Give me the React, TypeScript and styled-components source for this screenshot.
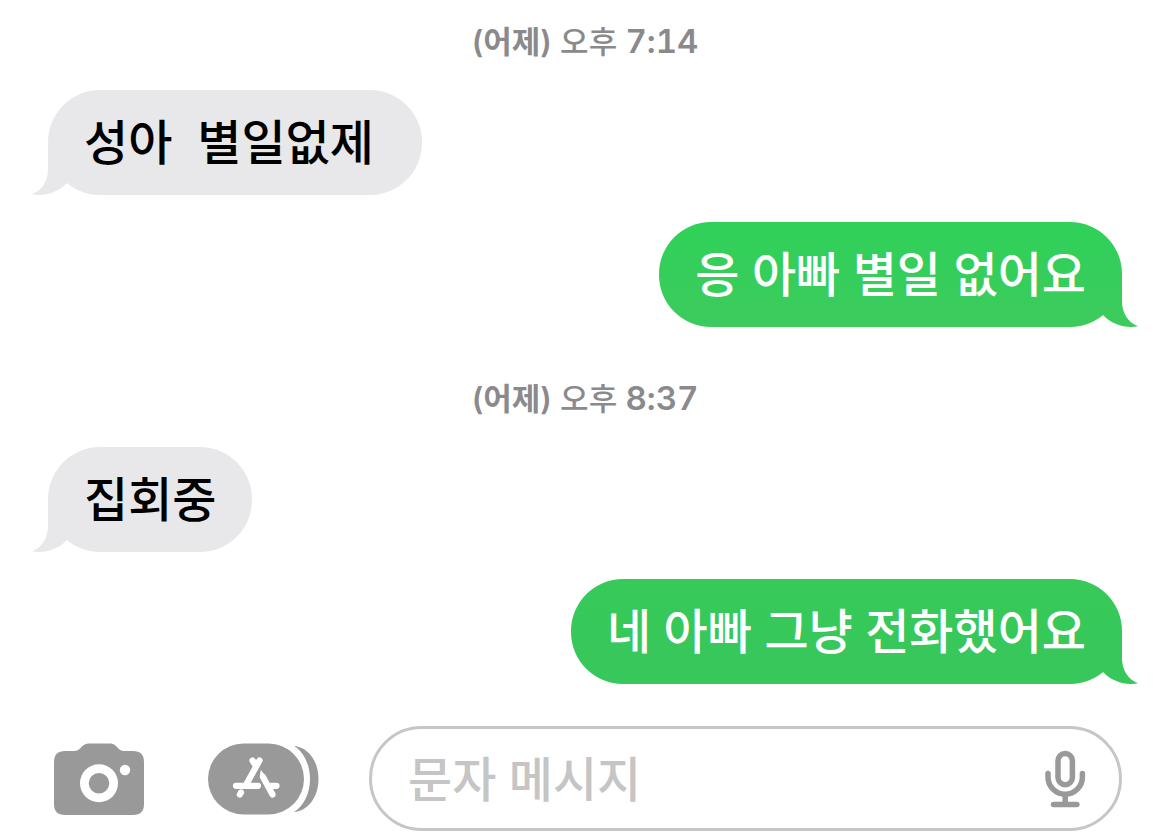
import React, { useState } from "react";
import styled, { createGlobalStyle } from "styled-components";

const GlobalStyle = createGlobalStyle`
  * { box-sizing: border-box; }
  body {
    margin: 0;
    background: #fff;
    font-family: "Noto Sans", "Noto Sans CJK KR", sans-serif;
    font-weight: 500;
  }
`;

const Screen = styled.main`
  display: flex;
  flex-direction: column;
  padding: 22px 48px 7px;
`;

const Group = styled.section`
  display: flex;
  flex-direction: column;
  gap: 27px;

  & + & {
    margin-top: 52px;
  }
`;

const Stamp = styled.time`
  display: block;
  margin-bottom: 1px;
  color: #8a8a8d;
  font-family: Inter, "Noto Sans CJK KR", sans-serif;
  font-size: 31px;
  font-weight: 500;
  line-height: 40px;
  text-align: center;
`;

const Day = styled.span`
  font-weight: 600;
`;

const Clock = styled.span`
  font-size: 33px;
  font-weight: 600;
  font-variant-numeric: tabular-nums;
  line-height: 1;
`;

type Tone = { top: string; bottom: string; ink: string };

const tones: Record<string, Tone> = {
  gray: { top: "#e8e8ea", bottom: "#e8e8ea", ink: "#000" },
  bright: { top: "#2fd159", bottom: "#3ccb5d", ink: "#fff" },
  green: { top: "#37c95a", bottom: "#37c75b", ink: "#fff" },
};

const Bubble = styled.p<{ $sent: boolean; $tone: Tone }>`
  position: relative;
  align-self: ${(p) => (p.$sent ? "flex-end" : "flex-start")};
  margin: 0;
  padding: 16px 36px 17px;
  border-radius: 52px;
  background: linear-gradient(${(p) => p.$tone.top}, ${(p) => p.$tone.bottom});
  color: ${(p) => p.$tone.ink};
  font-size: 48px;
  line-height: 72px;
  white-space: pre-wrap;
`;

const TailShape = styled.svg<{ $sent: boolean }>`
  position: absolute;
  bottom: 0;
  ${(p) => (p.$sent ? "right: -16px; transform: scaleX(-1);" : "left: -16px;")}
`;

const Composer = styled.form`
  display: flex;
  align-items: center;
  margin-top: 42px;
  padding-left: 6px;
`;

const IconButton = styled.button<{ $gap: number }>`
  display: flex;
  flex: none;
  margin: 0 ${(p) => p.$gap}px 0 0;
  padding: 0;
  border: 0;
  background: none;
  color: #999;
`;

const Field = styled.div`
  display: flex;
  flex: 1;
  align-items: center;
  min-width: 0;
  height: 105px;
  border: 3px solid #c6c6c6;
  border-radius: 53px;
`;

const Input = styled.input`
  flex: 1;
  min-width: 0;
  height: 72px;
  padding: 0 0 0 36px;
  border: 0;
  outline: 0;
  background: none;
  color: #000;
  font: inherit;
  font-size: 48px;
  line-height: 72px;

  &::placeholder {
    color: #c5c5c6;
    opacity: 1;
  }
`;

function Message({ sent = false, tone, children }: { sent?: boolean; tone: string; children: string }) {
  const t = tones[tone];
  const id = `tail-${tone}`;
  return (
    <Bubble $sent={sent} $tone={t}>
      <TailShape $sent={sent} width="52" height="53" viewBox="0 0 52 53" aria-hidden="true">
        <linearGradient id={id} gradientUnits="userSpaceOnUse" x1="0" y1="-52" x2="0" y2="53">
          <stop offset="0" stopColor={t.top} />
          <stop offset="1" stopColor={t.bottom} />
        </linearGradient>
        <path fill={`url(#${id})`} d="M16 0V27C16 39 10 48.500 0 52.300C13 54.500 26 50.500 35 41L52 20L30 0Z" />
      </TailShape>
      {children}
    </Bubble>
  );
}

function Timestamp({ day, period, clock }: { day: string; period: string; clock: string }) {
  return (
    <Stamp>
      <Day>({day})</Day> {period} <Clock>{clock}</Clock>
    </Stamp>
  );
}

const CameraIcon = () => (
  <svg width="90" height="72" viewBox="0 0 90 72" aria-hidden="true">
    <path
      fill="currentColor"
      fillRule="evenodd"
      d="M11 8H20C23 8 24.500 7 26 5.500L28.500 3C31 1 33 .5 36 .5H55C58 .5 60 1 62 3L64.500 5.500C66 7 67 8 70 8H79Q90 8 90 19V61Q90 72 79 72H11Q0 72 0 61V19Q0 8 11 8ZM45 21.300a19 19 0 1 0 0 38a19 19 0 1 0 0-38ZM45 30a10.300 10.300 0 1 1 0 20.600a10.300 10.300 0 1 1 0-20.600ZM71 21.800a5.200 5.200 0 1 0 0 10.400a5.200 5.200 0 1 0 0-10.400Z"
    />
  </svg>
);

const AppsIcon = () => (
  <svg width="111" height="72" viewBox="0 0 111 72" aria-hidden="true">
    <rect x="0" y=".5" width="96" height="71" rx="35.500" fill="currentColor" />
    <path fill="currentColor" d="M86 3C100 4 110.500 18 110.500 36S100 68 86 69C96 63 102 50 102 36S96 9 86 3Z" />
    <g stroke="#fff" strokeWidth="6.200" strokeLinecap="round" fill="none">
      <path d="M51.500 17.500L38.500 41M44.500 17.500L48 23M33 49.500L31.800 51.500" />
      <path d="M28 42.800H50M63 42.800H68.500" />
      <path d="M55 34L64.500 51.500" />
    </g>
    <path fill="#fff" d="M51.800 32L53 27L57.500 33L54 38Z" />
  </svg>
);

const MicIcon = () => (
  <svg width="41" height="58" viewBox="0 0 41 58" fill="none" stroke="currentColor" strokeWidth="5.500" strokeLinecap="round" aria-hidden="true">
    <rect x="13" y="3.500" width="14.400" height="31.200" rx="7.200" />
    <path d="M3 23.500V27A17.200 17.200 0 0 0 37.400 27V23.500M20.200 44.500V54M8.500 54.400H31.900" />
  </svg>
);

export default function App() {
  const [text, setText] = useState("");
  return (
    <>
      <GlobalStyle />
      <Screen>
        <Group>
          <Timestamp day="어제" period="오후" clock="7:14" />
          <Message tone="gray">{"성아  별일없제 "}</Message>
          <Message sent tone="bright">응 아빠 별일 없어요</Message>
        </Group>
        <Group>
          <Timestamp day="어제" period="오후" clock="8:37" />
          <Message tone="gray">집회중</Message>
          <Message sent tone="green">네 아빠 그냥 전화했어요</Message>
        </Group>
        <Composer onSubmit={(e) => e.preventDefault()}>
          <IconButton type="button" $gap={64} aria-label="카메라">
            <CameraIcon />
          </IconButton>
          <IconButton type="button" $gap={50} aria-label="앱">
            <AppsIcon />
          </IconButton>
          <Field>
            <Input
              aria-label="문자 메시지"
              placeholder="문자 메시지"
              value={text}
              onChange={(e) => setText(e.target.value)}
            />
            <IconButton type="button" $gap={33} aria-label="음성 입력">
              <MicIcon />
            </IconButton>
          </Field>
        </Composer>
      </Screen>
    </>
  );
}
